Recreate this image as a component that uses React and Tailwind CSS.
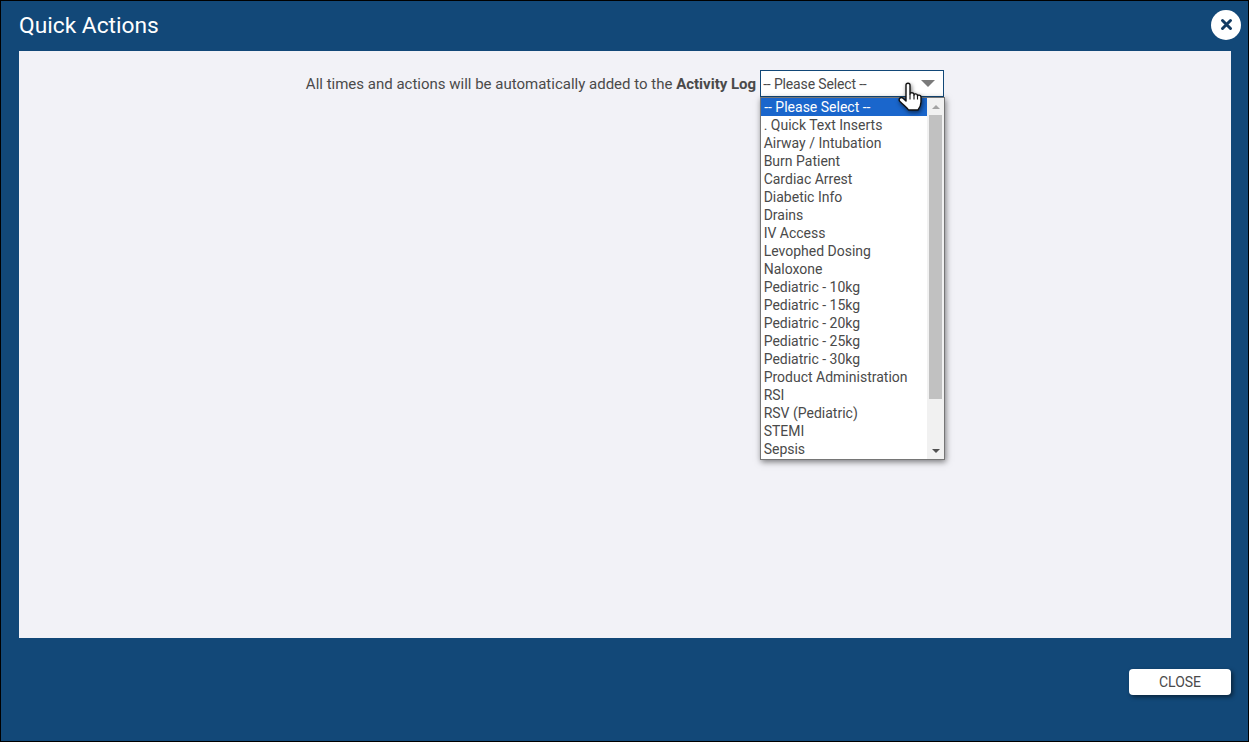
const options = [
  ". Quick Text Inserts",
  "Airway / Intubation",
  "Burn Patient",
  "Cardiac Arrest",
  "Diabetic Info",
  "Drains",
  "IV Access",
  "Levophed Dosing",
  "Naloxone",
  "Pediatric - 10kg",
  "Pediatric - 15kg",
  "Pediatric - 20kg",
  "Pediatric - 25kg",
  "Pediatric - 30kg",
  "Product Administration",
  "RSI",
  "RSV (Pediatric)",
  "STEMI",
  "Sepsis",
];

function HandCursor() {
  return (
    <svg
      className="absolute left-[136px] top-[11px] z-10 drop-shadow-[1px_2px_2px_rgba(0,0,0,0.55)]"
      width="30"
      height="34"
      viewBox="0 0 30 34"
    >
      <path
        d="M10 4c0-2.400 4-2.400 4 0v9c0-1.800 4-1.800 4 .5v.5c0-1.600 3.500-1.600 3.500.5v.5c0-1.400 3.500-1.200 3.500 1v5c0 3.500-1.500 6-3 8H12.500C11 26.500 8 24.500 4 20.500c-2.200-2.500.5-5 3-3.300l3 2.800z"
        fill="#fff"
        stroke="#111"
        strokeWidth="1.400"
        strokeLinejoin="round"
      />
      <path d="M14 13v5.500M18 14v4.500M21.500 15v3.500" stroke="#111" strokeWidth="1.100" fill="none" />
    </svg>
  );
}

function SelectList() {
  return (
    <div className="absolute left-0 top-[27px] z-0 flex h-[363px] w-[185px] border border-[#767676] bg-white shadow-[1px_2px_6px_rgba(0,0,0,0.5)]">
      <div className="w-[166px]">
        <div className="h-[18px] bg-[#1a66cc] pl-[3px] leading-[18px] text-white">-- Please Select --</div>
        {options.map((o) => (
          <div key={o} className="h-[18px] pl-[2.500px] leading-[18px] whitespace-nowrap text-[#4a4a4a]">
            {o}
          </div>
        ))}
      </div>
      <div className="flex w-[17px] flex-col bg-[#f1f1f1]">
        <div className="flex h-[17px] items-center justify-center">
          <div className="h-0 w-0 border-x-[4px] border-b-[4px] border-x-transparent border-b-[#a3a3a3]" />
        </div>
        <div className="mx-[2px] h-[284px] bg-[#c1c1c1]" />
        <div className="flex-1" />
        <div className="flex h-[17px] items-center justify-center">
          <div className="h-0 w-0 border-x-[4px] border-t-[4px] border-x-transparent border-t-[#505050]" />
        </div>
      </div>
    </div>
  );
}

export default function App() {
  return (
    <div className="flex h-[742px] w-[1249px] flex-col border border-black bg-[#124878] font-['Roboto',sans-serif] text-[14px] text-[#4a4a4a]">
      <div className="flex h-[50px] items-center justify-between pr-[7px] pl-[18px]">
        <h1 className="text-[22.750px] font-normal text-white">Quick Actions</h1>
        <button className="mb-[3px] flex h-[30px] w-[30px] items-center justify-center rounded-full bg-white">
          <svg width="13" height="13" viewBox="0 0 13 13">
            <path d="M2.500 2.500l8 8M10.500 2.500l-8 8" stroke="#123a62" strokeWidth="3" strokeLinecap="round" />
          </svg>
        </button>
      </div>

      <div className="mr-[17px] ml-[18px] h-[587px] bg-[#f2f2f7] pt-[19px]">
        <div className="flex items-center justify-center">
          <span className="pt-[2px] text-[15px]">
            All times and actions will be automatically added to the <b className="font-bold">Activity Log</b>
          </span>
          <div className="relative ml-[4px]">
            <div className="flex h-[27px] w-[184px] items-center justify-between border border-[#124878] bg-white pr-[8px] pl-[2px]">
              <span className="pt-[2px] tracking-[-0.150px]">-- Please Select --</span>
              <div className="h-0 w-0 border-x-[7px] border-t-[7px] border-x-transparent border-t-[#7a7a7a]" />
            </div>
            <SelectList />
            <HandCursor />
          </div>
        </div>
      </div>

      <div className="flex flex-1 items-start justify-end pt-[31px] pr-[17px]">
        <button className="h-[26px] w-[102px] rounded-[4px] bg-white text-[14px] text-[#4a4a4a] shadow-[2px_2px_4px_rgba(0,0,0,0.5)]">
          CLOSE
        </button>
      </div>
    </div>
  );
}
